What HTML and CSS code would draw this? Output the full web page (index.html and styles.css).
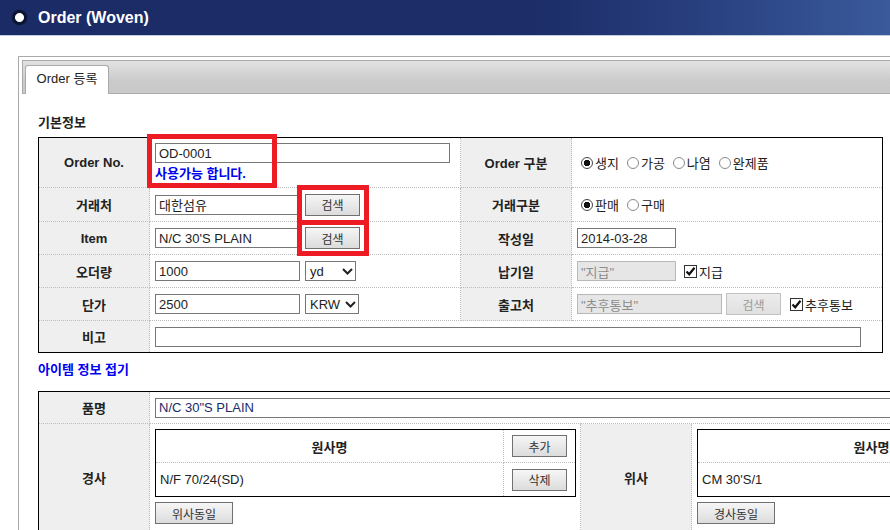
FILE: index.html
```html
<!DOCTYPE html>
<html>
<head>
    <title>Order (Woven)</title>
    <link rel="stylesheet" href="styles.css">
</head>
<body>
<div class="page">
    <div class="top-bar">
        <span class="top-dot"></span>
        <h1>Order (Woven)</h1>
    </div>

    <div class="panel">
        <div class="tab-bar">
            <div class="tab">Order 등록</div>
        </div>

        <div class="panel-body">
            <h2>기본정보</h2>
            <table class="form-table basic">
                <colgroup>
                    <col class="c-label"><col class="c-value"><col class="c-label"><col class="c-value">
                </colgroup>
                <tr class="r-order">
                    <th>Order No.</th>
                    <td>
                        <div class="field stack">
                            <input type="text" class="w-order" value="OD-0001">
                            <div class="ok-msg">사용가능 합니다.</div>
                        </div>
                    </td>
                    <th>Order 구분</th>
                    <td>
                        <div class="field">
                            <label class="radio"><span class="mark on"></span>생지</label>
                            <label class="radio"><span class="mark"></span>가공</label>
                            <label class="radio"><span class="mark"></span>나염</label>
                            <label class="radio"><span class="mark"></span>완제품</label>
                        </div>
                    </td>
                </tr>
                <tr class="r-client">
                    <th>거래처</th>
                    <td>
                        <div class="field">
                            <input type="text" class="w-mid" value="대한섬유">
                            <button class="btn">검색</button>
                        </div>
                    </td>
                    <th>거래구분</th>
                    <td>
                        <div class="field">
                            <label class="radio"><span class="mark on"></span>판매</label>
                            <label class="radio"><span class="mark"></span>구매</label>
                        </div>
                    </td>
                </tr>
                <tr class="r-item">
                    <th>Item</th>
                    <td>
                        <div class="field">
                            <input type="text" class="w-mid" value="N/C 30'S PLAIN">
                            <button class="btn">검색</button>
                        </div>
                    </td>
                    <th>작성일</th>
                    <td>
                        <div class="field">
                            <input type="text" class="w-date" value="2014-03-28">
                        </div>
                    </td>
                </tr>
                <tr class="r-qty">
                    <th>오더량</th>
                    <td>
                        <div class="field">
                            <input type="text" class="w-mid" value="1000">
                            <span class="select w-yd">yd<svg width="11" height="7" viewBox="0 0 11 7"><path d="M1 1 L5.5 5.5 L10 1" fill="none" stroke="#222" stroke-width="2"/></svg></span>
                        </div>
                    </td>
                    <th>납기일</th>
                    <td>
                        <div class="field">
                            <input type="text" class="w-date off" value='"지급"' disabled>
                            <label class="check gap-8"><span class="box"><svg width="11" height="11" viewBox="0 0 11 11"><path d="M1.5 5.5 L4.2 8.3 L9.5 1.8" fill="none" stroke="#111" stroke-width="2.2"/></svg></span>지급</label>
                        </div>
                    </td>
                </tr>
                <tr class="r-price">
                    <th>단가</th>
                    <td>
                        <div class="field">
                            <input type="text" class="w-mid" value="2500">
                            <span class="select w-krw">KRW<svg width="11" height="7" viewBox="0 0 11 7"><path d="M1 1 L5.5 5.5 L10 1" fill="none" stroke="#222" stroke-width="2"/></svg></span>
                        </div>
                    </td>
                    <th>출고처</th>
                    <td>
                        <div class="field">
                            <input type="text" class="w-mid off" value='"추후통보"' disabled>
                            <button class="btn off" disabled>검색</button>
                            <label class="check gap-9"><span class="box"><svg width="11" height="11" viewBox="0 0 11 11"><path d="M1.5 5.5 L4.2 8.3 L9.5 1.8" fill="none" stroke="#111" stroke-width="2.2"/></svg></span>추후통보</label>
                        </div>
                    </td>
                </tr>
                <tr class="r-memo">
                    <th>비고</th>
                    <td colspan="3">
                        <div class="field">
                            <input type="text" class="w-memo" value="">
                        </div>
                    </td>
                </tr>
            </table>

            <div class="fold-link">아이템 정보 접기</div>

            <table class="form-table item">
                <colgroup>
                    <col class="c-label"><col class="c-wide"><col class="c-label"><col class="c-wide">
                </colgroup>
                <tr class="r-name">
                    <th>품명</th>
                    <td colspan="3">
                        <div class="field">
                            <input type="text" class="w-name" value='N/C 30"S PLAIN'>
                        </div>
                    </td>
                </tr>
                <tr class="r-yarn">
                    <th>경사</th>
                    <td class="yarn-cell">
                        <table class="yarn-table">
                            <tr class="y-head">
                                <th>원사명</th>
                                <td class="y-act"><button class="btn">추가</button></td>
                            </tr>
                            <tr class="y-row">
                                <td>N/F 70/24(SD)</td>
                                <td class="y-act"><button class="btn">삭제</button></td>
                            </tr>
                        </table>
                        <button class="btn wide">위사동일</button>
                    </td>
                    <th>위사</th>
                    <td class="yarn-cell">
                        <table class="yarn-table">
                            <tr class="y-head">
                                <th>원사명</th>
                                <td class="y-act"><button class="btn">추가</button></td>
                            </tr>
                            <tr class="y-row">
                                <td>CM 30'S/1</td>
                                <td class="y-act"><button class="btn">삭제</button></td>
                            </tr>
                        </table>
                        <button class="btn wide">경사동일</button>
                    </td>
                </tr>
            </table>
        </div>
    </div>

    <!-- red annotation boxes drawn over the form -->
    <div class="note note-order"></div>
    <div class="note note-client"></div>
    <div class="note note-item"></div>
</div>
</body>
</html>
```

FILE: styles.css
```css
body {
    margin: 0;
    font-family: "Liberation Sans", "Noto Sans CJK KR", sans-serif;
    font-size: 13px;
    color: #222;
    background: #fff;
    overflow: hidden;
}

.page {
    position: relative;
    width: 890px;
    height: 530px;
    overflow: hidden;
}

/* title bar */
.top-bar {
    height: 35px;
    display: flex;
    align-items: center;
    padding-left: 11px;
    background: linear-gradient(to right, #1b2b66 0%, #1c2d68 60%, #283f7e 78%, #3a5a9b 100%);
    border-bottom: 1px solid #c3cbe0;
}

.top-dot {
    width: 17px;
    height: 17px;
    border-radius: 50%;
    background: radial-gradient(circle, #fff 0, #fff 4px, #0c1533 5px, #0c1533 7px, rgba(12, 21, 51, 0) 8.5px);
    margin-right: 10px;
}

h1 {
    margin: 0;
    color: #fff;
    font-size: 16px;
    font-weight: bold;
}

/* tab panel */
.panel {
    margin: 20px 0 0 18px;
    width: 1200px;
    height: 600px;
    border: 1px solid #aaa;
    padding: 3px;
}

.tab-bar {
    height: 32px;
    border: 1px solid #aaa;
    background: linear-gradient(#e2e2e2, #cacaca 65%, #c9c9c9);
    display: flex;
    align-items: flex-end;
    padding-left: 2px;
}

.tab {
    width: 84px;
    height: 29px;
    margin-bottom: -1px;
    box-sizing: border-box;
    border: 1px solid #aaa;
    border-bottom: none;
    border-radius: 3px 3px 0 0;
    background: #fff;
    text-align: center;
    line-height: 26px;
    font-size: 13px;
    color: #222;
}

.panel-body {
    padding: 0 16px;
}

h2 {
    margin: 21px 0 6px;
    font-size: 13px;
    line-height: 16px;
    font-weight: bold;
    color: #222;
}

/* form tables */
.form-table {
    border-collapse: collapse;
    table-layout: fixed;
    border: 1px solid #000;
}

.form-table.basic {
    width: 844px;
}

.form-table.item {
    width: 1085px;
}

.c-label { width: 111px; }
.c-value { width: 311px; }
.c-wide { width: 431px; }

.form-table > tbody > tr > th,
.form-table > tbody > tr > td {
    border: 1px dotted #bdbdbd;
    padding: 0 5px;
    vertical-align: middle;
}

.form-table > tbody > tr > th {
    background: #efefef;
    text-align: center;
    font-weight: bold;
    padding: 0;
}

.r-order { height: 50px; }
.r-client { height: 34px; }
.r-item { height: 33px; }
.r-qty { height: 33px; }
.r-price { height: 33px; }
.r-memo { height: 32px; }
.r-name { height: 32px; }

.field {
    display: flex;
    align-items: center;
}

.field.stack {
    flex-direction: column;
    align-items: flex-start;
    gap: 3px;
}

input[type="text"] {
    font-family: "Liberation Sans", "Noto Sans CJK KR", sans-serif;
    font-size: 13px;
    color: #222;
    height: 20px;
    box-sizing: border-box;
    border: 1px solid #777;
    padding: 0 3px;
    margin: 0;
    background: #fff;
}

input.off {
    background: #e6e6e6;
    border-color: #b8b8b8;
    color: #8c8c8c;
}

.w-order { width: 295px; }
.w-mid { width: 145px; }
.w-date { width: 99px; }
.w-memo { width: 706px; }
.w-name { width: 760px; }

input.w-name {
    color: #1a2a6a;
}

.ok-msg {
    color: #0000f0;
    font-weight: bold;
    font-size: 13px;
    line-height: 16px;
}

.btn {
    font-family: "Liberation Sans", "Noto Sans CJK KR", sans-serif;
    font-size: 12px;
    color: #333;
    width: 55px;
    height: 22px;
    margin: 0 0 0 5px;
    padding: 0;
    border: 1px solid #707070;
    background: linear-gradient(#f6f6f6, #dcdcdc);
    box-sizing: border-box;
}

.btn.off {
    margin-left: 4px;
    border-color: #c2c2c2;
    background: linear-gradient(#ececec, #e0e0e0);
    color: #9a9a9a;
}

.btn.wide {
    width: 78px;
    margin: 5px 0 0;
    display: block;
}

/* fake select */
.select {
    display: inline-flex;
    align-items: center;
    justify-content: space-between;
    height: 20px;
    box-sizing: border-box;
    border: 1px solid #777;
    margin-left: 5px;
    padding: 0 2px 0 4px;
    font-size: 13px;
    color: #222;
}

.w-yd { width: 51px; }
.w-krw { width: 54px; }

/* radios and checkboxes */
.radio {
    display: flex;
    align-items: center;
    margin-right: 4px;
    color: #222;
}

.mark {
    width: 12px;
    height: 12px;
    box-sizing: border-box;
    border: 1px solid #8a8a8a;
    border-radius: 50%;
    background: #fff;
    margin: 0 2px 0 4px;
}

.mark.on {
    border-color: #444;
    background: radial-gradient(circle, #111 0, #111 3px, #fff 3.5px);
}

.check {
    display: flex;
    align-items: center;
}

.gap-8 { margin-left: 8px; }
.gap-9 { margin-left: 9px; }

.box {
    width: 13px;
    height: 13px;
    box-sizing: border-box;
    border: 1px solid #333;
    background: #fff;
    display: flex;
    align-items: center;
    justify-content: center;
    margin-right: 2px;
}

.fold-link {
    margin: 9px 0 13px;
    color: #0000f0;
    font-weight: bold;
    line-height: 16px;
}

/* yarn tables */
.form-table > tbody > tr > td.yarn-cell {
    padding: 5px 5px 6px;
    vertical-align: top;
}

.yarn-table {
    width: 421px;
    border-collapse: collapse;
    table-layout: fixed;
    border: 1px solid #000;
}

.yarn-table th,
.yarn-table td {
    border: 1px dotted #bdbdbd;
    padding: 0 4px;
    font-size: 13px;
    color: #222;
}

.yarn-table th {
    font-weight: bold;
    text-align: center;
    background: #fff;
}

.yarn-table .y-act {
    width: 63px;
    text-align: center;
}

.yarn-table .btn {
    margin: 0;
    width: 55px;
}

.y-head { height: 33px; }
.y-row { height: 34px; }

/* red annotation boxes */
.note {
    position: absolute;
    border: 5px solid #ed1c24;
}

.note-order {
    left: 147px;
    top: 134px;
    width: 120px;
    height: 44px;
}

.note-client {
    left: 297px;
    top: 185px;
    width: 62px;
    height: 30px;
}

.note-item {
    left: 297px;
    top: 220px;
    width: 62px;
    height: 26px;
}
```
